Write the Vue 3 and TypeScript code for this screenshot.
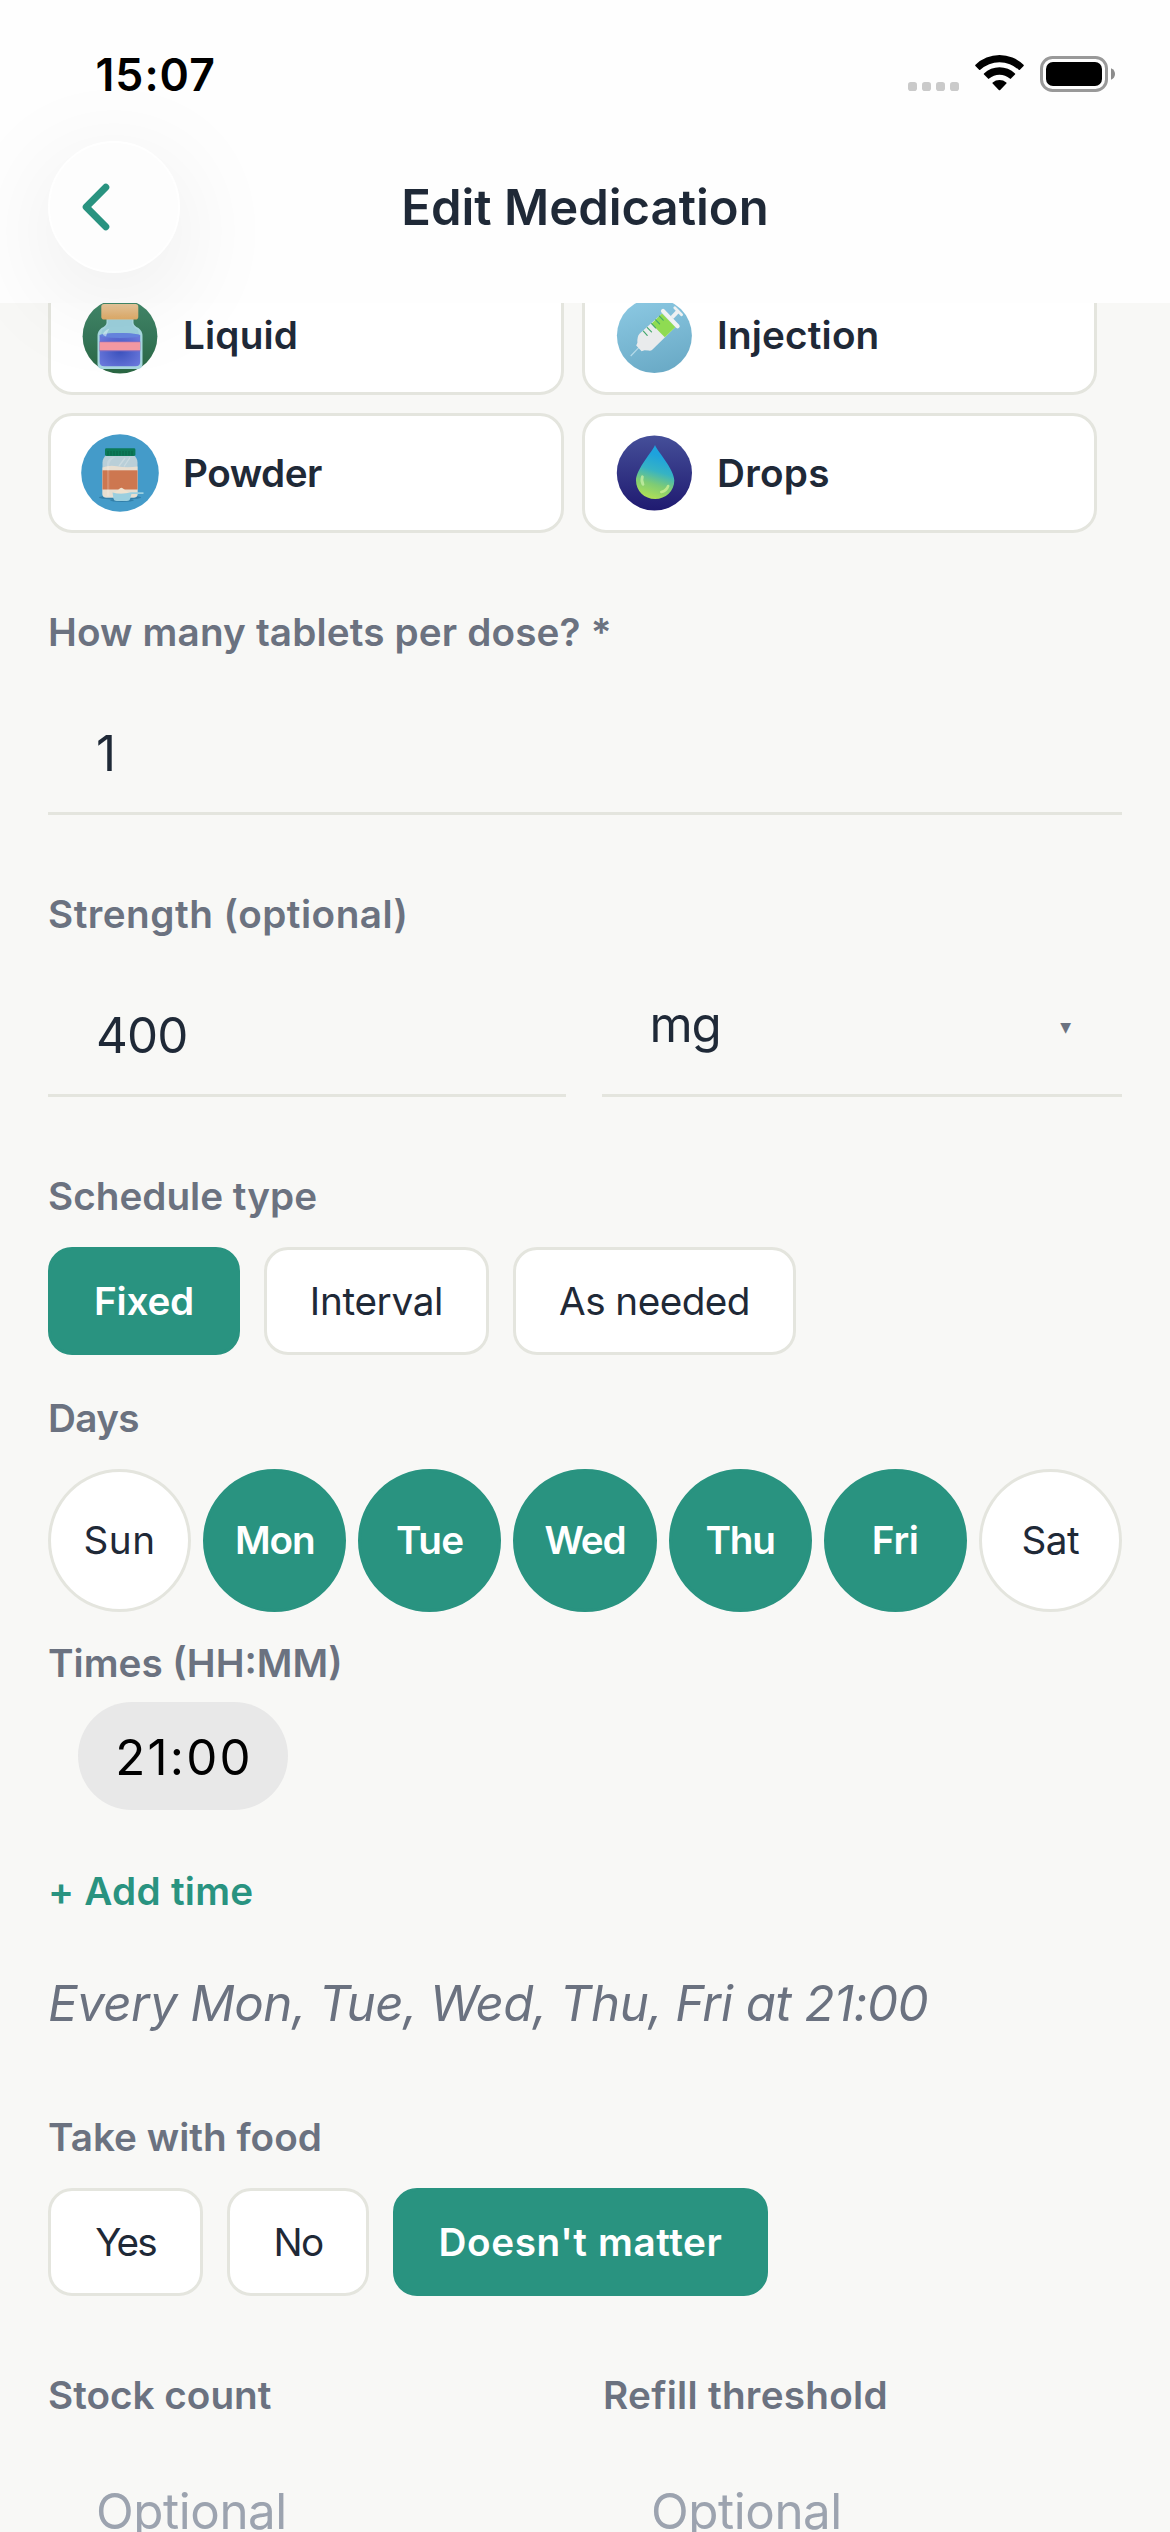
<script setup lang="ts">
import { ref } from 'vue'

interface Chip {
  label: string
  width: number
  tracking: number
}

interface Day {
  label: string
  tracking: number
}

const forms = [
  { id: 'liquid', label: 'Liquid', tracking: 0.17 },
  { id: 'injection', label: 'Injection', tracking: 0.17 },
  { id: 'powder', label: 'Powder', tracking: -0.5 },
  { id: 'drops', label: 'Drops', tracking: 0.29 },
]

const scheduleTypes: Chip[] = [
  { label: 'Fixed', width: 192, tracking: -0.19 },
  { label: 'Interval', width: 225, tracking: -0.33 },
  { label: 'As needed', width: 283, tracking: -0.55 },
]
const scheduleType = ref('Fixed')

const days: Day[] = [
  { label: 'Sun', tracking: 0.5 },
  { label: 'Mon', tracking: -1.2 },
  { label: 'Tue', tracking: -0.5 },
  { label: 'Wed', tracking: -1.2 },
  { label: 'Thu', tracking: -1.2 },
  { label: 'Fri', tracking: -0.3 },
  { label: 'Sat', tracking: -0.47 },
]
const selectedDays = ref(['Mon', 'Tue', 'Wed', 'Thu', 'Fri'])

const foodOptions: Chip[] = [
  { label: 'Yes', width: 155, tracking: -1.9 },
  { label: 'No', width: 142, tracking: -1.65 },
  { label: "Doesn't matter", width: 375, tracking: 0.59 },
]
const food = ref("Doesn't matter")

const px = (n: number) => `${n}px`
</script>

<template>
  <div class="screen">
    <header class="header">
      <div class="status">
        <span class="clock">15:07</span>
        <div class="status-icons">
          <svg class="dots" width="51" height="9" viewBox="0 0 51 9" fill="#cacaca">
            <rect x="0" width="9" height="9" rx="2.8" />
            <rect x="14" width="9" height="9" rx="2.8" />
            <rect x="28" width="9" height="9" rx="2.8" />
            <rect x="42" width="9" height="9" rx="2.8" />
          </svg>
          <svg class="wifi" width="49" height="36" viewBox="0 0 49 36">
            <path d="M0.4 10.9 Q-0.1 10.4 0.5 9.8 A34.5 34.5 0 0 1 48.5 9.8 Q49.1 10.4 48.6 10.9 L44.9 14.8 Q44.3 15.3 43.7 14.8 A28 28 0 0 0 5.3 14.8 Q4.7 15.3 4.1 14.8 Z" />
            <path d="M9 19.6 Q8.4 19 9 18.4 A22.6 22.6 0 0 1 40 18.4 Q40.6 19 40 19.6 L36 23.6 Q35.4 24.2 34.8 23.6 A15.6 15.6 0 0 0 14.2 23.6 Q13.6 24.2 13 23.6 Z" />
            <path d="M17.6 28.6 Q17 28 17.7 27.4 A10.6 10.6 0 0 1 31.3 27.4 Q32 28 31.4 28.6 L25.2 35 Q24.5 35.7 23.8 35 Z" />
          </svg>
          <svg class="battery" width="76" height="36" viewBox="0 0 76 36">
            <rect x="1.5" y="1.5" width="65" height="33" rx="11" fill="none" stroke="#999" stroke-width="3" />
            <rect x="6" y="6" width="56" height="24" rx="7" />
            <path d="M71 12.2 Q75 14 75 18 Q75 22 71 23.8 Z" fill="#8c8c8c" />
          </svg>
        </div>
      </div>
      <div class="nav">
        <button class="back" aria-label="Back">
          <svg width="28" height="48" viewBox="0 0 28 48">
            <path d="M23.8 4.2 L4.2 24 L23.8 43.8" fill="none" stroke="#299380" stroke-width="7" stroke-linecap="round" stroke-linejoin="round" />
          </svg>
        </button>
        <h1 class="title">Edit Medication</h1>
        <div class="nav-spacer"></div>
      </div>
    </header>

    <main class="form">
      <div class="cards">
        <button v-for="form in forms" :key="form.id" class="card">
          <svg v-if="form.id === 'liquid'" class="pic" viewBox="0 0 78 78">
            <defs>
              <linearGradient id="lqBg" x1="0" y1="0" x2="0" y2="1">
                <stop offset="0" stop-color="#43896a" />
                <stop offset="0.5" stop-color="#36775a" />
                <stop offset="1" stop-color="#2a6642" />
              </linearGradient>
              <radialGradient id="lqFill" cx="0.5" cy="0.55" r="0.6">
                <stop offset="0" stop-color="#3c52bd" />
                <stop offset="1" stop-color="#6a78dc" />
              </radialGradient>
              <linearGradient id="lqCap" x1="0" y1="0" x2="0" y2="1">
                <stop offset="0" stop-color="#e6c69b" />
                <stop offset="1" stop-color="#dda966" />
              </linearGradient>
            </defs>
            <circle cx="39" cy="40.2" r="37.4" fill="url(#lqBg)" />
            <path d="M25.5 22 H52.5 V27 Q53 30 57.5 32 Q61.5 35 61.5 40 V68 Q61.5 73 56 73 H22 Q16.5 73 16.5 68 V40 Q16.5 35 20.5 32 Q25 30 25.5 27 Z" fill="#a8d8e0" />
            <path d="M27 24 H51 V28 Q53 32 57 34 L58 38 H20 L21 34 Q25 32 27 28 Z" fill="#9bcfdb" />
            <path d="M18.6 39 Q39 35 59.2 39 V66 Q59.2 70.2 54.5 70.2 H23.3 Q18.6 70.2 18.6 66 Z" fill="url(#lqFill)" />
            <ellipse cx="38.9" cy="39.5" rx="20.2" ry="2.6" fill="#6685df" />
            <rect x="18.6" y="45.3" width="40.6" height="10" fill="#8a70c0" />
            <rect x="18.6" y="46.2" width="40.6" height="8" fill="#f59aa3" />
            <path d="M22 39 Q22 35 28.5 32.5 Q26 36 25 40.5 Z" fill="#d4edf2" opacity="0.65" />
            <rect x="20.3" y="8" width="37" height="15.5" rx="2.8" fill="url(#lqCap)" />
          </svg>
          <svg v-else-if="form.id === 'powder'" class="pic" viewBox="0 0 78 78">
            <circle cx="39" cy="39" r="38.8" fill="#449bc9" />
            <ellipse cx="39" cy="63.5" rx="21" ry="2.2" fill="#327fa9" />
            <path d="M25.5 21 H52.5 Q56.5 24 56.5 28.5 V60 Q56.5 63.7 52.8 63.7 H25.2 Q21.5 63.7 21.5 60 V28.5 Q21.5 24 25.5 21 Z" fill="#b9cfd8" />
            <path d="M21.5 33.5 Q29 30.5 36 32.3 Q46 34 56.5 32.5 V60 Q56.5 63.2 52.8 63.2 H25.2 Q21.5 63.2 21.5 60 Z" fill="#e7ded0" />
            <rect x="21.5" y="36.3" width="35" height="19.2" fill="#cd7750" />
            <path d="M26 36 V29 Q26.5 25 31 23.4 L34.5 23 Q28.5 26 28.3 31 V62 H26 Z" fill="#fff" opacity="0.16" />
            <path d="M44 24 L38 32 M49 23.5 L43 32.5" stroke="#d6e2e6" stroke-width="1.3" opacity="0.6" />
            <rect x="24" y="14.3" width="30.4" height="7.7" rx="1.4" fill="#0b7a59" />
            <path d="M27 17 V21.5 M30 17 V21.5 M33 17 V21.5 M36 17 V21.5 M39 17 V21.5 M42 17 V21.5 M45 17 V21.5 M48 17 V21.5 M51 17 V21.5" stroke="#096548" stroke-width="1" />
            <ellipse cx="41" cy="66.3" rx="12" ry="1.6" fill="#327fa9" />
            <path d="M32.5 59 Q36.5 57.3 39 54.3 Q40.5 53 42 54.6 Q45 57.5 49 59 Z" fill="#efe2cf" />
            <path d="M31.5 58.5 Q40.5 61 50 58.3 H62.5 V60 H50.4 L49.2 64.8 Q48.7 67 46 67 H35.6 Q33 67 32.5 64.8 Z" fill="#9bcfdf" />
          </svg>
          <svg v-else-if="form.id === 'injection'" class="pic" viewBox="0 0 78 78">
            <defs>
              <linearGradient id="injBg" x1="0.3" y1="0" x2="0.6" y2="1">
                <stop offset="0" stop-color="#8bc8e2" />
                <stop offset="1" stop-color="#6aaac6" />
              </linearGradient>
            </defs>
            <circle cx="39.4" cy="39.6" r="37.5" fill="url(#injBg)" />
            <path d="M15.7 60 L24 51.3" stroke="#b6dbe9" stroke-width="1.1" />
            <path d="M57 21.5 L63.5 14.6" stroke="#eef1f2" stroke-width="4" />
            <path d="M59.8 11.8 L66.6 18.8" stroke="#eef1f2" stroke-width="2.8" stroke-linecap="round" />
            <path d="M47 17.6 L60.5 31 L37.5 53.5 Q36 55 33.5 54.6 L29.5 54.3 L26.6 55.2 L21.2 49.6 L22.4 46.8 Q22 40.5 24.5 37.8 Z" fill="#e9ebec" />
            <path d="M47 17.6 L60.5 31 L49.8 41.2 L36.4 27.8 Z" fill="#8fdb52" />
            <path d="M48 15 L62.6 30.2" stroke="#f1f3f3" stroke-width="4.2" stroke-linecap="round" />
            <path d="M28.4 35.2 L32.2 39.4 M32.3 31.6 L36.5 35.9 M36.6 27.7 L40.6 31.8 M40.7 23.8 L44.6 27.9 M44.4 20.2 L48.2 24.2" stroke="#43a86c" stroke-width="1.2" stroke-linecap="round" />
          </svg>
          <svg v-else class="pic" viewBox="0 0 78 78">
            <defs>
              <linearGradient id="drBg" x1="0" y1="0" x2="0" y2="1">
                <stop offset="0" stop-color="#454f99" />
                <stop offset="1" stop-color="#1f1a70" />
              </linearGradient>
              <linearGradient id="drFill" x1="0.6" y1="0.1" x2="0.4" y2="1">
                <stop offset="0.1" stop-color="#1ea2dd" />
                <stop offset="0.42" stop-color="#36b3c4" />
                <stop offset="0.7" stop-color="#7fcc74" />
                <stop offset="1" stop-color="#b0e055" />
              </linearGradient>
            </defs>
            <circle cx="39.4" cy="39" r="37.6" fill="url(#drBg)" />
            <path d="M40 11 C42 17 59.3 35 59.3 46.5 C59.3 57 50.7 65 40.1 65 C29.5 65 21 57 21 46.5 C21 35 38 17 40 11 Z" fill="url(#drFill)" />
            <path d="M27.4 42.8 Q26 46.5 28 50.4" fill="none" stroke="#c5eda5" stroke-width="2.8" stroke-linecap="round" opacity="0.8" />
            <path d="M46.3 58 Q51.5 56.8 53.2 52" fill="none" stroke="#cdf094" stroke-width="2.6" stroke-linecap="round" opacity="0.8" />
          </svg>
          <span class="card-label" :style="{ letterSpacing: px(form.tracking) }">{{ form.label }}</span>
        </button>
      </div>

      <section class="group">
        <label class="label dose-label">How many tablets per dose? *</label>
        <div class="field"><span>1</span></div>
      </section>

      <section class="group">
        <label class="label strength-label">Strength (optional)</label>
        <div class="split">
          <div class="field amount"><span>400</span></div>
          <div class="field select">
            <span class="unit">mg</span>
            <span class="caret">▼</span>
          </div>
        </div>
      </section>

      <section class="group">
        <label class="label">Schedule type</label>
        <div class="chips">
          <button
            v-for="c in scheduleTypes"
            :key="c.label"
            class="chip"
            :class="{ on: c.label === scheduleType }"
            :style="{ width: px(c.width), letterSpacing: px(c.tracking) }"
            @click="scheduleType = c.label"
          >{{ c.label }}</button>
        </div>
      </section>

      <section class="days-group">
        <label class="label days-label">Days</label>
        <div class="days">
          <button
            v-for="d in days"
            :key="d.label"
            class="day"
            :class="{ on: selectedDays.includes(d.label) }"
            :style="{ letterSpacing: px(d.tracking) }"
          >{{ d.label }}</button>
        </div>
      </section>

      <section class="times-group">
        <label class="label">Times (HH:MM)</label>
        <div class="time-pill">21:00</div>
        <button class="add">+ Add time</button>
        <p class="summary">Every Mon, Tue, Wed, Thu, Fri at 21:00</p>
      </section>

      <section class="food-group">
        <label class="label">Take with food</label>
        <div class="chips">
          <button
            v-for="c in foodOptions"
            :key="c.label"
            class="chip"
            :class="{ on: c.label === food }"
            :style="{ width: px(c.width), letterSpacing: px(c.tracking) }"
            @click="food = c.label"
          >{{ c.label }}</button>
        </div>
      </section>

      <section class="group split">
        <div class="stock">
          <label class="label">Stock count</label>
          <div class="field placeholder"><span>Optional</span></div>
        </div>
        <div class="stock">
          <label class="label refill-label">Refill threshold</label>
          <div class="field placeholder"><span>Optional</span></div>
        </div>
      </section>
    </main>
  </div>
</template>

<style>
body {
  margin: 0;
  background: #f8f8f6;
}
</style>

<style scoped>
.screen {
  width: 1170px;
  height: 2532px;
  overflow: hidden;
  display: flex;
  flex-direction: column;
  background: #f8f8f6;
  color: #1f2937;
  font-family: Inter, 'Liberation Sans', sans-serif;
  font-size: 38.7px;
  line-height: 48px;
}

button {
  appearance: none;
  margin: 0;
  padding: 0;
  border: 0;
  background: none;
  color: inherit;
  font: inherit;
}

.header {
  position: relative;
  z-index: 2;
  flex: none;
  height: 303px;
  background: #fefefe;
}

.status {
  display: flex;
  justify-content: space-between;
  height: 141px;
  box-sizing: border-box;
  padding: 47px 54px 0 95.5px;
  color: #000;
}

.clock {
  font-size: 44.6px;
  font-weight: 600;
  line-height: 56px;
  letter-spacing: 1px;
}

.status-icons {
  display: flex;
  align-items: flex-start;
}

.dots {
  margin: 35px 16.5px 0 0;
}

.wifi {
  margin: 8px 16px 0 0;
}

.battery {
  margin-top: 9px;
}

.nav {
  display: flex;
  align-items: center;
  justify-content: space-between;
  height: 132px;
  padding: 0 48px;
}

.back,
.nav-spacer {
  width: 132px;
  height: 132px;
  box-sizing: border-box;
}

.back {
  display: flex;
  align-items: center;
  padding-left: 32px;
  border: 2px solid #fff;
  border-radius: 50%;
  background: #fdfdfd;
  box-shadow: 0 24px 110px rgba(0, 0, 0, 0.085);
}

.title {
  margin: 0;
  padding-top: 2px;
  font-size: 49px;
  font-weight: 600;
  line-height: 60px;
}

.form {
  flex: none;
  margin-top: -28px;
  padding: 0 48px;
}

.cards {
  display: grid;
  grid-template-columns: 516px 515px;
  gap: 18px;
}

.card {
  display: flex;
  align-items: center;
  gap: 24px;
  height: 120px;
  box-sizing: border-box;
  padding: 0 30px;
  border: 3px solid #e4e5de;
  border-radius: 24px;
  background: #fff;
}

.pic {
  width: 78px;
  height: 78px;
}

.card-label {
  font-weight: 600;
}

.group {
  margin-top: 75px;
}

.label {
  display: block;
  color: #6b7280;
  font-weight: 600;
}

.dose-label {
  letter-spacing: 0.14px;
}

.strength-label {
  letter-spacing: 0.48px;
}

.days-label {
  letter-spacing: -0.66px;
}

.refill-label {
  letter-spacing: 0.27px;
}

.field {
  flex: 1;
  height: 159px;
  box-sizing: border-box;
  padding: 67px 48px 0;
  border-bottom: 3px solid #e4e5de;
  font-size: 49.3px;
  line-height: 60px;
}

.amount {
  letter-spacing: -0.8px;
}

.split {
  display: flex;
  gap: 36px;
}

.select {
  display: flex;
  justify-content: space-between;
  padding: 56px 51px 0 48px;
}

.unit {
  letter-spacing: -1.1px;
}

.caret {
  padding-top: 3px;
  color: #6b7280;
  font-family: 'DejaVu Sans', sans-serif;
  font-size: 14px;
}

.chips {
  display: flex;
  gap: 24px;
  margin-top: 27px;
}

.chip,
.day {
  box-sizing: border-box;
  border: 3px solid #e4e5de;
  background: #fff;
  text-align: center;
}

.chip {
  height: 108px;
  border-radius: 24px;
}

.on {
  border-color: #299380;
  background: #299380;
  color: #fff;
  font-weight: 600;
}

.days-group {
  margin-top: 39px;
}

.days {
  display: flex;
  gap: 12px;
  margin-top: 27px;
}

.day {
  flex: 1 1 0;
  height: 143px;
  padding-bottom: 1px;
  border-radius: 50%;
}

.times-group {
  margin-top: 27px;
}

.time-pill {
  width: 210px;
  height: 108px;
  box-sizing: border-box;
  margin: 15px 0 0 30px;
  padding: 1px 0 0 2px;
  border-radius: 54px;
  background: #e8e8e8;
  color: #000;
  font-size: 49.3px;
  line-height: 108px;
  letter-spacing: 2.15px;
  text-align: center;
}

.add {
  display: block;
  margin-top: 57px;
  color: #299380;
  font-weight: 600;
  letter-spacing: 0.26px;
}

.summary {
  margin: 58px 0 0;
  color: #6b7280;
  font-size: 49.3px;
  font-style: italic;
  line-height: 60px;
  letter-spacing: -0.56px;
}

.food-group {
  margin-top: 80px;
}

.stock {
  flex: 1;
}

.placeholder {
  padding-top: 62px;
  color: #9ca3af;
  letter-spacing: -0.42px;
}
</style>
